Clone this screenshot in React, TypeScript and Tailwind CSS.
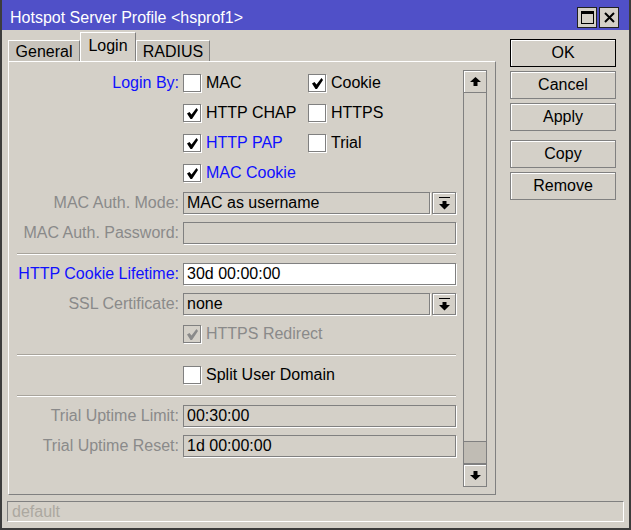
import type { ReactNode } from 'react';

const BLUE = 'text-[#1010ff]';
const GREY = 'text-[#8a8a8a]';

function CheckMark({ color }: { color: string }) {
  return (
    <svg width="11" height="11" viewBox="0 0 11 11">
      <polygon points="0,5.5 2.5,4 4.5,6.5 9.5,0 11,2 5,11 3.5,11" fill={color} />
    </svg>
  );
}

function Checkbox({ checked, disabled }: { checked?: boolean; disabled?: boolean }) {
  return (
    <div
      className={`w-[18px] h-[18px] shrink-0 border border-[#808080] shadow-[1px_1px_0_#fff] flex items-center justify-center pt-[1px] ${
        disabled ? 'bg-[#d4d0c8]' : 'bg-white'
      }`}
    >
      {checked && <CheckMark color={disabled ? '#8a8a8a' : '#000'} />}
    </div>
  );
}

function CheckItem({
  label,
  checked,
  disabled,
  color = 'text-black',
  wide,
}: {
  label: string;
  checked?: boolean;
  disabled?: boolean;
  color?: string;
  wide?: boolean;
}) {
  return (
    <div className={`flex items-center gap-[5px] ${wide ? 'w-[125px]' : ''}`}>
      <Checkbox checked={checked} disabled={disabled} />
      <span className={`${color} whitespace-nowrap`}>{label}</span>
    </div>
  );
}

function Field({ value, white }: { value?: string; white?: boolean }) {
  return (
    <div
      className={`flex-1 h-[22px] border border-[#808080] shadow-[1px_1px_0_#fff] pl-[3px] flex items-center whitespace-nowrap ${
        white ? 'bg-white' : 'bg-[#d4d0c8]'
      }`}
    >
      {value}
    </div>
  );
}

function DropIcon() {
  return (
    <svg width="11" height="13" viewBox="0 0 11 13">
      <rect x="0" y="0" width="11" height="1" fill="#000" />
      <polygon points="3.5,4 7.5,4 7.5,7 11,7 5.5,12.5 0,7 3.5,7" fill="#000" />
    </svg>
  );
}

function Select({ value }: { value: string }) {
  return (
    <div className="flex-1 flex items-center">
      <Field value={value} />
      <div className="ml-[2px] w-[24px] h-[22px] border border-[#808080] shadow-[inset_1px_1px_0_#fff,1px_1px_0_#fff] bg-[#d4d0c8] flex items-center justify-center">
        <DropIcon />
      </div>
    </div>
  );
}

function Row({ label, color = GREY, children }: { label?: string; color?: string; children: ReactNode }) {
  return (
    <div className="h-[30px] flex items-center">
      <div className={`w-[162px] text-right whitespace-nowrap ${color}`}>{label}</div>
      <div className="ml-[4px] flex-1 flex items-center">{children}</div>
    </div>
  );
}

function Separator() {
  return (
    <div className="h-[11px] flex items-center">
      <div className="w-full h-[2px] border-t border-[#a8a49c] border-b border-b-white" />
    </div>
  );
}

function Arrow({ up }: { up?: boolean }) {
  return (
    <svg width="11" height="9" viewBox="0 0 11 9" className={up ? '' : 'rotate-180'}>
      <polygon points="5.5,0 11,5 7.5,5 7.5,9 3.5,9 3.5,5 0,5" fill="#000" />
    </svg>
  );
}

function Scrollbar() {
  return (
    <div className="w-[24px] mt-[8px] mb-[7px] mr-[8px] border-x border-[#808080] flex flex-col">
      <div className="h-[23px] border border-[#808080] shadow-[inset_1px_1px_0_#fff] flex items-center justify-center -mx-px">
        <Arrow up />
      </div>
      <div className="flex-1" />
      <div className="h-[23px] bg-[#c0bcb4] border-y border-[#808080]" />
      <div className="h-[23px] border border-[#808080] shadow-[inset_1px_1px_0_#fff] flex items-center justify-center -mx-px">
        <Arrow />
      </div>
    </div>
  );
}

function Button({ label, focused }: { label: string; focused?: boolean }) {
  return (
    <div
      className={`h-[28px] w-[106px] flex items-center justify-center border shadow-[inset_1px_1px_0_#fff] ${
        focused ? 'border-black' : 'border-[#808080]'
      }`}
    >
      {label}
    </div>
  );
}

function Tab({ label, active, w }: { label: string; active?: boolean; w: string }) {
  return (
    <div
      className={`${w} flex items-center justify-center border-t border-l border-t-white border-l-white border-r border-r-[#808080] ${
        active ? 'h-[29px] bg-[#d4d0c8] pb-[2px]' : 'h-[21px] bg-[#c8c4bc] pt-[1px]'
      }`}
    >
      {label}
    </div>
  );
}

export default function App() {
  return (
    <div className="w-[631px] h-[530px] flex flex-col bg-[#d4d0c8] text-black text-[16px] leading-[18px] font-['Liberation_Sans',Arial,sans-serif] overflow-hidden">
      {/* Title bar */}
      <div className="h-[30px] shrink-0 bg-[#5050c8] flex items-center pt-[5px] pl-[8px] pr-[10px] border-x-2 border-[#3c3c3c]">
        <span className="text-white flex-1">Hotspot Server Profile &lt;hsprof1&gt;</span>
        <div className="flex gap-[2px]">
          <div className="w-[20px] h-[21px] bg-[#d4d0c8] border border-[#202020] flex items-center justify-center">
            <div className="w-[13px] h-[13px] border border-black border-t-[3px]" />
          </div>
          <div className="w-[20px] h-[21px] bg-[#d4d0c8] border border-[#202020] flex items-center justify-center">
            <svg width="11" height="11" viewBox="0 0 11 11">
              <path d="M1 1 L10 10 M10 1 L1 10" stroke="#000" strokeWidth="2" />
            </svg>
          </div>
        </div>
      </div>

      {/* Body */}
      <div className="flex-1 flex flex-col border-x-2 border-b-2 border-[#3c3c3c]">
        <div className="h-[465px] flex pl-[6px]">
          {/* Left: tabs + panel */}
          <div className="w-[488px] flex flex-col">
            <div className="h-[31px] flex items-end">
              <Tab label="General" w="w-[72px]" />
              <Tab label="Login" w="w-[56px]" active />
              <Tab label="RADIUS" w="w-[74px]" />
            </div>
            <div className="h-[434px] flex border border-t-white border-l-white border-r-[#808080] border-b-[#808080]">
              <div className="flex-1 pl-[8px] pr-[7px] pt-[6px] flex flex-col">
                <Row label="Login By:" color={BLUE}>
                  <CheckItem label="MAC" wide />
                  <CheckItem label="Cookie" checked />
                </Row>
                <Row>
                  <CheckItem label="HTTP CHAP" checked wide />
                  <CheckItem label="HTTPS" />
                </Row>
                <Row>
                  <CheckItem label="HTTP PAP" checked wide color={BLUE} />
                  <CheckItem label="Trial" />
                </Row>
                <Row>
                  <CheckItem label="MAC Cookie" checked color={BLUE} />
                </Row>
                <Row label="MAC Auth. Mode:">
                  <Select value="MAC as username" />
                </Row>
                <Row label="MAC Auth. Password:">
                  <Field />
                </Row>
                <Separator />
                <Row label="HTTP Cookie Lifetime:" color={BLUE}>
                  <Field value="30d 00:00:00" white />
                </Row>
                <Row label="SSL Certificate:">
                  <Select value="none" />
                </Row>
                <Row>
                  <CheckItem label="HTTPS Redirect" checked disabled color={GREY} />
                </Row>
                <Separator />
                <Row>
                  <CheckItem label="Split User Domain" />
                </Row>
                <Separator />
                <Row label="Trial Uptime Limit:">
                  <Field value="00:30:00" />
                </Row>
                <Row label="Trial Uptime Reset:">
                  <Field value="1d 00:00:00" />
                </Row>
              </div>
              <Scrollbar />
            </div>
          </div>

          {/* Right: buttons */}
          <div className="ml-[14px] pt-[9px] flex flex-col gap-[4px]">
            <Button label="OK" focused />
            <Button label="Cancel" />
            <Button label="Apply" />
            <div className="h-[1px]" />
            <Button label="Copy" />
            <Button label="Remove" />
          </div>
        </div>

        {/* Status bar */}
        <div className="mt-[6px] mx-[5px] h-[21px] border border-t-[#808080] border-l-[#808080] border-r-white border-b-white pl-[4px] flex items-center text-[#aca8a0]">
          default
        </div>
      </div>
    </div>
  );
}
